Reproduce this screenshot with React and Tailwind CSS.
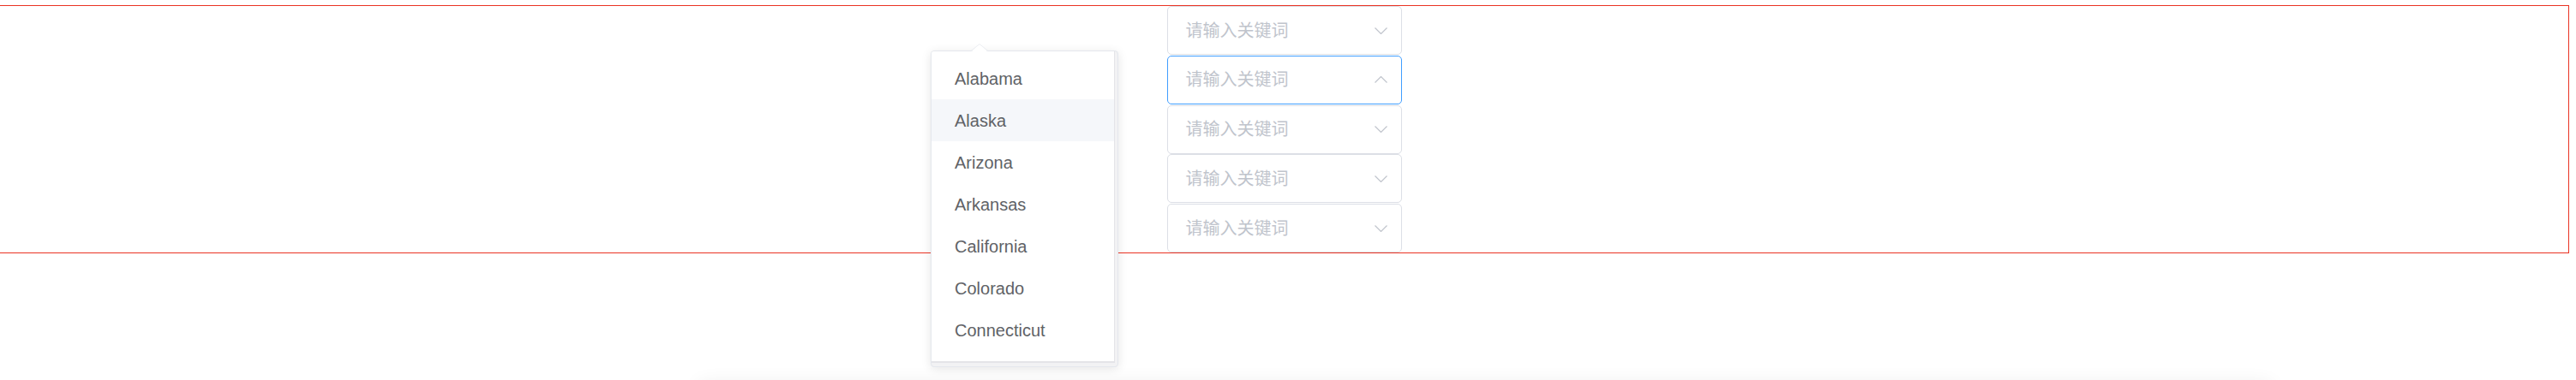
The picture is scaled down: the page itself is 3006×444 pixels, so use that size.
import React from "react";

const states = ["Alabama", "Alaska", "Arizona", "Arkansas", "California", "Colorado", "Connecticut"];

const Chevron = ({ up }) => (
    <svg width="15" height="8" viewBox="0 0 15 8" className="shrink-0">
        <polyline
            points={up ? "0.5,7.5 7.5,0.5 14.5,7.5" : "0.5,0.5 7.5,7.5 14.5,0.5"}
            fill="none"
            stroke="#c0c4cc"
            strokeWidth="1.2"
        />
    </svg>
);

const Select = ({ focused }) => (
    <div
        className={
            focused
                ? "h-[57px] flex items-center justify-between pl-[21px] pr-[16px] bg-white border border-[#409eff] rounded-[5px]"
                : "h-[57px] flex items-center justify-between pl-[21px] pr-[16px] bg-white border border-[#dcdfe6] rounded-[5px]"
        }
    >
        <span className="text-[20px] leading-none text-[#c0c4cc]">请输入关键词</span>
        <Chevron up={focused} />
    </div>
);

export default function App() {
    return (
        <div className="bg-white pt-[6px] font-['Liberation_Sans','Noto_Sans_CJK_SC',sans-serif]">
            {/* outlined area */}
            <div className="relative w-[2998px] border-y border-r border-[#ea3323] flex justify-center">
                <div className="w-[274px] flex flex-col gap-[0.75px]">
                    <Select />
                    <Select focused />
                    <Select />
                    <Select />
                    <Select />
                </div>

                {/* dropdown popper */}
                <div className="absolute left-[1086px] top-[52px] w-[219px] h-[370px] flex flex-col border border-[#e4e7ed] rounded-[4px] bg-[#f2f2f4] shadow-[0_2px_12px_rgba(0,0,0,0.1)]">
                    <svg width="20" height="10" viewBox="0 0 20 10" className="absolute left-[46px] top-[-9px]">
                        <polygon points="0,10 10,0.5 20,10" fill="#ffffff" />
                        <polyline points="0,8.5 10,0.5 20,8.5" fill="none" stroke="#eceef2" strokeWidth="1" />
                    </svg>
                    <ul className="w-[214px] h-[364px] pt-[7px] bg-white border-r-[1.5px] border-b-2 border-[#e4e4e8] rounded-tl-[3px]">
                        {states.map((s) => (
                            <li
                                key={s}
                                className={
                                    s === "Alaska"
                                        ? "h-[49px] flex items-center pl-[27px] text-[20px] text-[#606266] bg-[#f5f7fa]"
                                        : "h-[49px] flex items-center pl-[27px] text-[20px] text-[#606266]"
                                }
                            >
                                {s}
                            </li>
                        ))}
                    </ul>
                </div>
            </div>

            {/* next block, only its shadow shows */}
            <div className="ml-[815px] mt-[150px] w-[1836px] h-[200px] bg-white shadow-[0_0_20px_rgba(0,0,0,0.06)]" />
        </div>
    );
}
